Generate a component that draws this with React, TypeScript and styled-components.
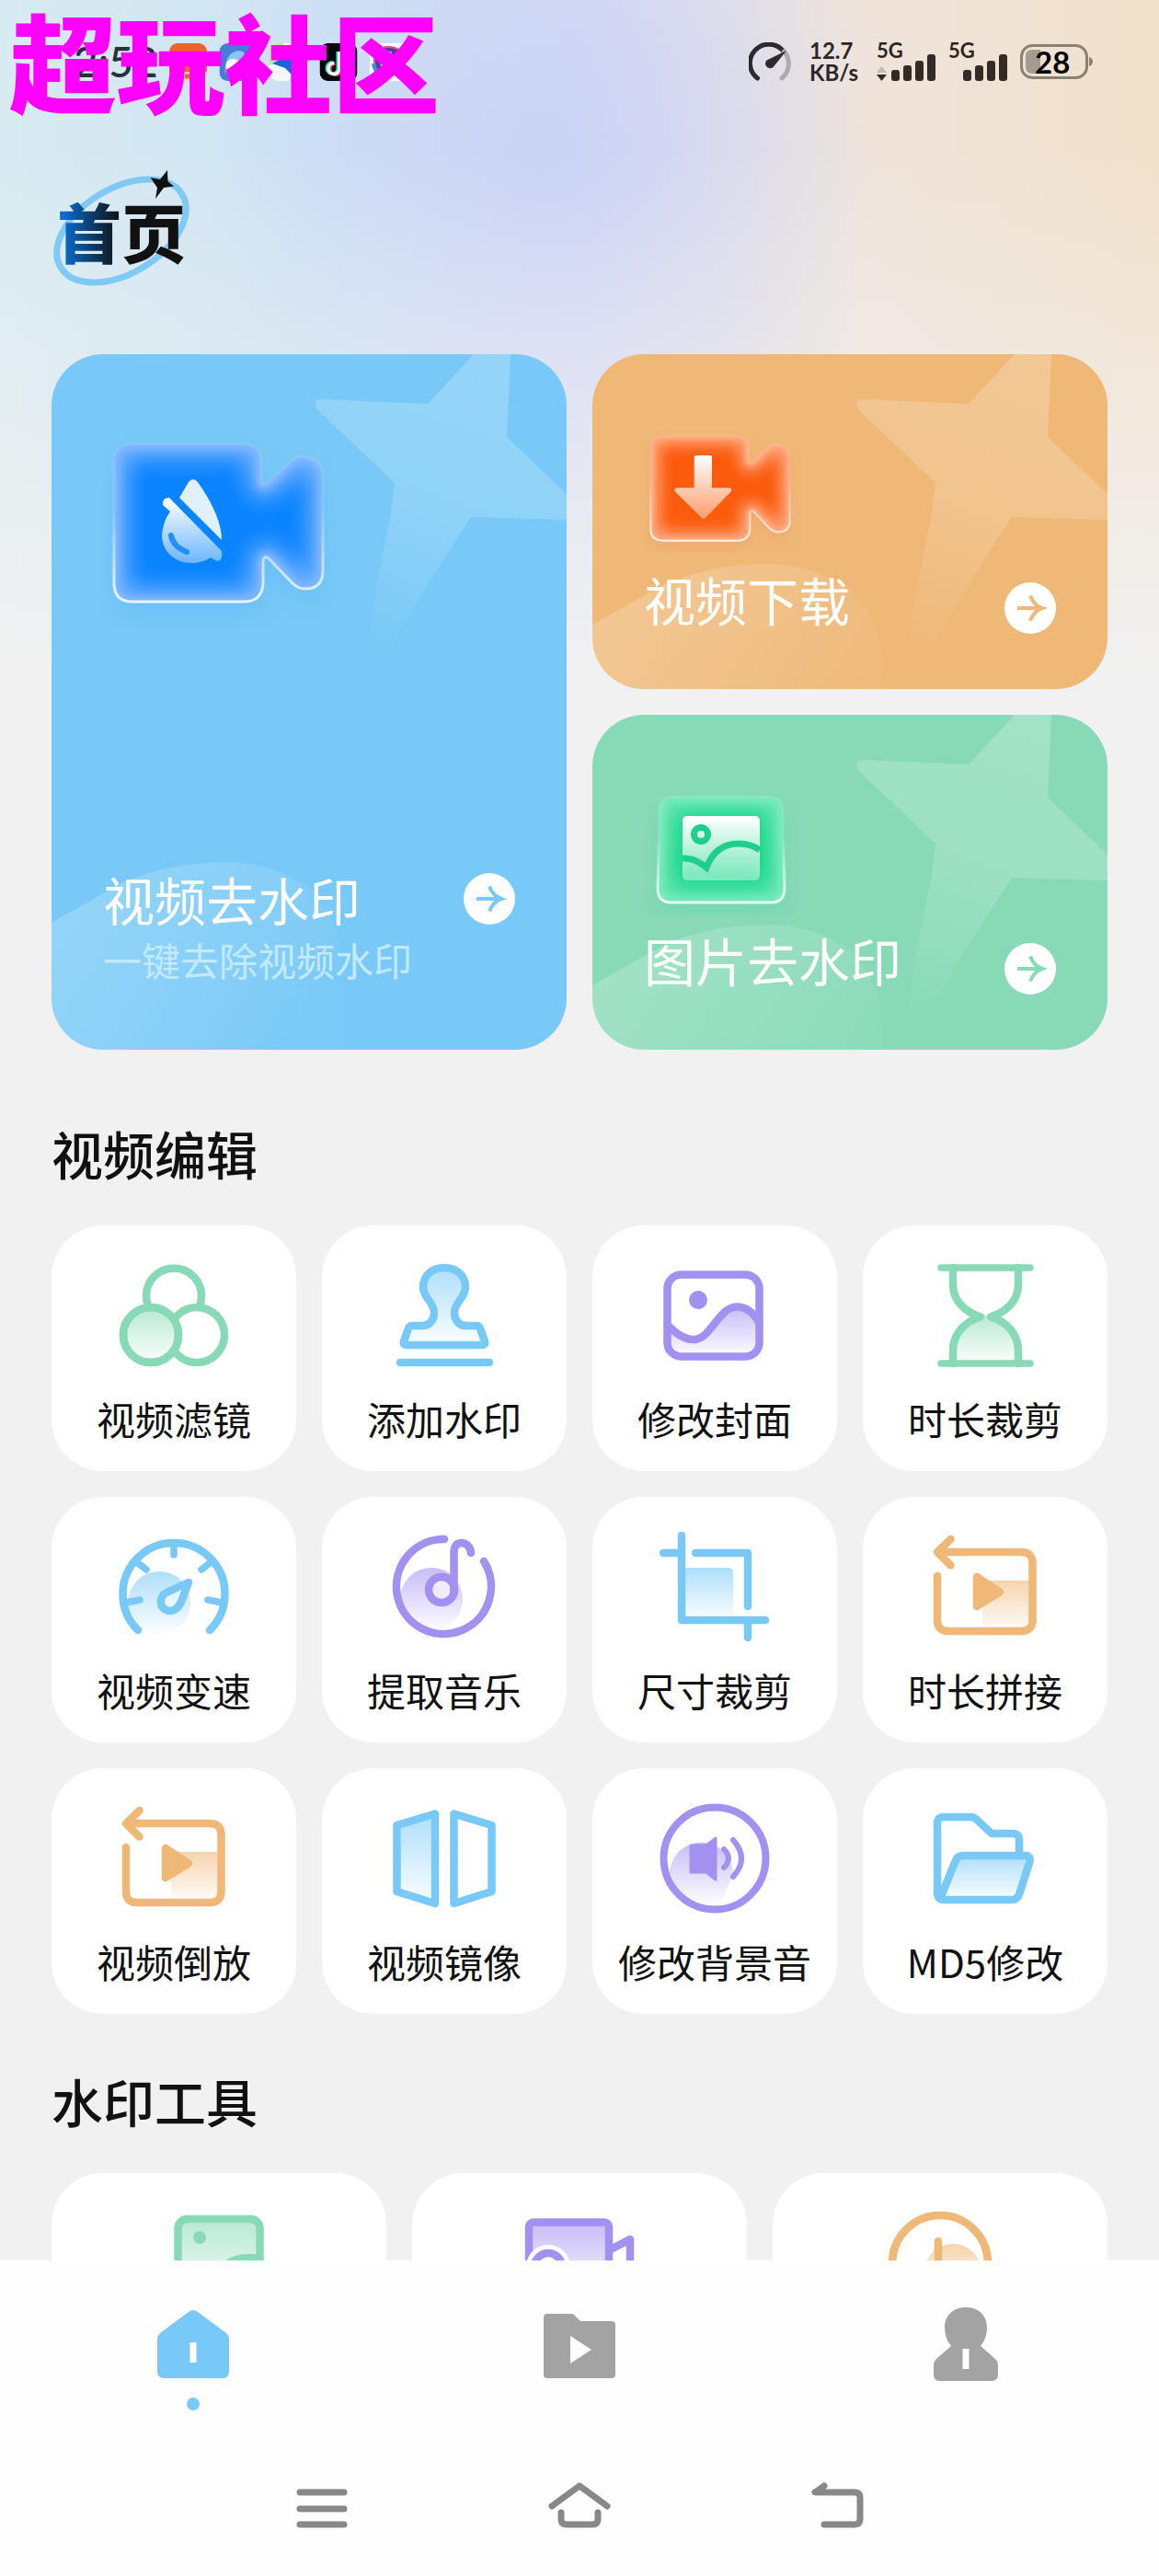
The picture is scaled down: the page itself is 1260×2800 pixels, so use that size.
import React, { ReactNode, useState } from 'react';
import styled, { createGlobalStyle } from 'styled-components';

const BLUE = '#78c9f7';
const GREEN = '#88dab7';
const PURPLE = '#a391f2';
const ORANGE = '#efb877';
const CJK = '"Noto Sans CJK SC", "Noto Sans", sans-serif';

const GlobalStyle = createGlobalStyle`
  *, *::before, *::after { box-sizing: border-box; }
  body { margin: 0; font-family: ${CJK}; color: #111; background: #f1f1f1; }
  button { font: inherit; color: inherit; border: 0; padding: 0; background: none; cursor: pointer; }
  h1, h2, p { margin: 0; }
  svg { display: block; flex: none; }
`;

const Screen = styled.div`
  position: relative;
  display: flex;
  flex-direction: column;
  height: 100vh;
  overflow: hidden;
`;

const Scroller = styled.main`
  flex: 1;
  min-height: 0;
  overflow-y: auto;
  scrollbar-width: none;
  background:
    linear-gradient(180deg, rgba(241, 241, 241, 0) 160px, rgba(241, 241, 241, 0.4) 400px, #f1f1f1 740px),
    radial-gradient(ellipse 360px 380px at 47% 190px, rgba(200, 208, 246, 0.8), rgba(200, 208, 246, 0) 100%),
    linear-gradient(90deg, #d8ebf1 0%, #cde2f4 28%, #d6dcf4 50%, #efe4dc 74%, #f2e1cb 100%);
`;

const Stamp = styled.div`
  position: absolute;
  top: 0;
  left: 10px;
  font-size: 117px;
  line-height: 128px;
  font-weight: 900;
  color: #ff00ff;
  white-space: nowrap;
  pointer-events: none;
`;

const StatusBar = styled.header`
  display: flex;
  align-items: center;
  justify-content: space-between;
  padding: 46px 71px 0 80px;
  height: 88px;
  font-family: Lato, "Open Sans", sans-serif;
`;

const StatusGroup = styled.div<{ $gap: number }>`
  display: flex;
  align-items: center;
  gap: ${(p) => p.$gap}px;
`;

const Clock = styled.span`
  font-size: 46px;
  line-height: 42px;
  font-weight: 500;
  color: #263238;
`;

const NetSpeed = styled.span`
  display: flex;
  flex-direction: column;
  font-size: 24px;
  line-height: 24px;
  font-weight: 700;
  color: #2c2627;
`;

const SignalBox = styled.span`
  display: grid;
  > * { grid-area: 1 / 1; }
`;

const SignalName = styled.span`
  align-self: start;
  font-size: 22px;
  line-height: 18px;
  font-weight: 700;
  color: #2c2622;
`;

const BatteryBox = styled.span`
  display: grid;
  align-items: center;
  > * { grid-area: 1 / 1; }
`;

const BatteryValue = styled.span`
  padding-left: 16px;
  font-size: 33px;
  line-height: 38px;
  font-weight: 700;
  color: #000;
`;

const Logo = styled.h1`
  display: inline-grid;
  place-items: center;
  margin: 96px 0 67px 57px;
  height: 134px;
  > * { grid-area: 1 / 1; }
`;

const LogoText = styled.span`
  font-size: 70px;
  line-height: 100px;
  font-weight: 900;
  background: linear-gradient(90deg, #0b6ccc 5%, #0d2a45 36%, #111 50%);
  background-clip: text;
  -webkit-background-clip: text;
  color: transparent;
`;

const Content = styled.div`
  padding: 0 56px;
`;

const Features = styled.section`
  display: grid;
  grid-template-columns: 1fr 1fr;
  grid-auto-rows: minmax(364px, auto);
  gap: 28px;
  margin-bottom: 72px;
`;

const Card = styled.a<{ $color: string; $tall?: boolean }>`
  position: relative;
  display: flex;
  flex-direction: column;
  justify-content: space-between;
  grid-row: ${(p) => (p.$tall ? 'span 2' : 'auto')};
  padding: ${(p) => (p.$tall ? '88px 56px 70px' : '76px 56px 60px')};
  border-radius: 56px;
  overflow: hidden;
  background: ${(p) => p.$color};
  color: #fff;
  text-decoration: none;
`;

const Backdrop = styled.svg<{ $end?: boolean }>`
  position: absolute;
  ${(p) => (p.$end ? 'left: 0; bottom: 0;' : 'right: 0; top: 0;')}
`;

const CardBody = styled.div`
  position: relative;
`;

const CardRow = styled.div<{ $tall?: boolean }>`
  display: flex;
  justify-content: space-between;
  align-items: ${(p) => (p.$tall ? 'center' : 'flex-end')};
`;

const CardTitle = styled.h2`
  font-size: 56px;
  line-height: 76px;
  font-weight: 400;
`;

const CardNote = styled.p`
  font-size: 42px;
  line-height: 56px;
  color: #c3e9ff;
`;

const SectionTitle = styled.h2`
  margin-bottom: 39px;
  font-size: 56px;
  line-height: 80px;
  font-weight: 500;
`;

const Tools = styled.section<{ $columns: number }>`
  display: grid;
  grid-template-columns: repeat(${(p) => p.$columns}, 1fr);
  gap: 28px;
  margin-bottom: 54px;
`;

const Tool = styled.button`
  display: flex;
  flex-direction: column;
  align-items: center;
  gap: 24px;
  min-height: 267px;
  padding: 38px 0 29px;
  border-radius: 56px;
  background: #fff;
  font-size: 42px;
  line-height: 56px;
  white-space: nowrap;
`;

const Dock = styled.footer`
  background: #fefefe;
`;

const TabBar = styled.nav`
  display: grid;
  grid-template-columns: repeat(3, 1fr);
  padding-top: 51px;
`;

const Tab = styled.button<{ $active: boolean }>`
  display: flex;
  flex-direction: column;
  align-items: center;
  gap: 18px;
  color: ${(p) => (p.$active ? BLUE : '#a3a3a3')};
  &::after {
    content: '';
    width: 14px;
    height: 14px;
    border-radius: 50%;
    background: ${(p) => (p.$active ? 'currentColor' : 'transparent')};
  }
`;

const SystemBar = styled.div`
  display: flex;
  justify-content: space-around;
  padding: 76px 16.6667% 44px;
  color: #888;
`;

/* ---------- status bar drawings ---------- */

const Gauge = () => (
  <svg width="46" height="42" viewBox="0 0 46 42" fill="none" strokeWidth="5" strokeLinecap="round">
    <path d="M9.500 39A20.500 20.500 0 1 1 38 10" stroke="#2b2a2e" />
    <path d="M38.500 10A20.500 20.500 0 0 1 36 39" stroke="#b0aaaf" />
    <path d="M41 9L27 26.500A5 5 0 1 1 19.500 19.500Z" fill="#2b2a2e" />
  </svg>
);

const Bars = ({ data }: { data?: boolean }) => (
  <svg width="65" height="42" viewBox="0 0 65 42" fill="#332c26">
    {data && <path d="M0 33L5.500 26L11 33Z" fill="#c4bab5" />}
    {data && <path d="M0 35L5.500 42L11 35Z" />}
    <rect x="16" y="30" width="9" height="12" rx="3" />
    <rect x="29" y="25" width="9" height="17" rx="3" />
    <rect x="42" y="20" width="9" height="22" rx="3" />
    <rect x="55" y="13" width="9" height="29" rx="3" />
  </svg>
);

const Signal = ({ data }: { data?: boolean }) => (
  <SignalBox>
    <Bars data={data} />
    <SignalName>5G</SignalName>
  </SignalBox>
);

const Battery = () => (
  <BatteryBox>
    <svg width="80" height="38" viewBox="0 0 80 38">
      <rect x="1.500" y="1.500" width="71" height="35" rx="12" fill="none" stroke="#8b8074" strokeWidth="3" />
      <path d="M13 6H22V32H13Q6 32 6 25V13Q6 6 13 6Z" fill="#a39c93" />
      <path d="M75 14Q79 15 79 19T75 24Z" fill="#8b8074" />
    </svg>
    <BatteryValue>28</BatteryValue>
  </BatteryBox>
);

const AppIcons = () => (
  <svg width="259" height="41" viewBox="0 0 259 41">
    <defs>
      <clipPath id="app"><rect width="41" height="41" rx="9" /></clipPath>
    </defs>
    <g clipPath="url(#app)">
      <rect width="41" height="41" fill="#f0622d" />
      <path d="M0 31H41V41H0Z" fill="#ffd5a8" />
      <path d="M9 17H32M15 12V24M27 12V26M10 25Q20 20 32 26" stroke="#fff" strokeWidth="4" fill="none" />
      <path d="M10 36H32" stroke="#e8662f" strokeWidth="5" strokeDasharray="5 2" />
    </g>
    <g transform="translate(54.500)" clipPath="url(#app)">
      <rect width="41" height="41" fill="#477dd6" />
      <path d="M6 32Q6 10 21 8Q36 10 36 32Z" fill="#8cc4f5" />
      <circle cx="15" cy="25" r="8" fill="#fff" />
      <path d="M22 0H41V41H24Q34 20 22 0Z" fill="#477dd6" />
    </g>
    <g transform="translate(109)" clipPath="url(#app)">
      <rect width="41" height="41" fill="#f4f8fb" />
      <path d="M0 0H15V16L0 24Z" fill="#c1eb95" />
      <path d="M28 0H41V41H22Z" fill="#8ed8f4" />
      <path d="M3 22L38 4L24 34L17 27Z" fill="#1467d8" />
    </g>
    <g transform="translate(163.500)" clipPath="url(#app)">
      <rect width="41" height="41" fill="#050508" />
      <path d="M20 9V28A6 6 0 1 1 14 21M20 11Q23 17 30 17" stroke="#25e6e4" strokeWidth="4" fill="none" />
      <path d="M23 10V29A6 6 0 1 1 17 22M23 12Q26 18 32 18" stroke="#f33c5b" strokeWidth="4" fill="none" />
      <path d="M21.500 9V28.500A6 6 0 1 1 15.500 21.500M21.500 11Q25 17 31 17.500" stroke="#fff" strokeWidth="3.500" fill="none" />
    </g>
    <g transform="translate(218)" clipPath="url(#app)">
      <rect width="41" height="41" fill="#fff" />
      <path d="M5 18Q5 4 20 4Q36 4 36 19Q36 34 19 34Q5 34 5 18" fill="#4b3fa8" stroke="#e64a86" strokeWidth="2" />
      <path d="M4 22Q6 36 20 36" stroke="#3a8fe0" strokeWidth="4" fill="none" />
      <path d="M12 15H30M22 9V22M12 24Q20 20 30 26" stroke="#fff" strokeWidth="3" fill="none" />
    </g>
  </svg>
);

const LogoOrbit = () => (
  <svg width="150" height="134" viewBox="0 0 150 134">
    <ellipse cx="75" cy="67" rx="77" ry="46" transform="rotate(-31 75 67)" fill="none" stroke="#7fcaf5" strokeWidth="7" />
    <path d="M125 1L125.500 13L132 18.500L121 20L112 32L114 20L106.500 9L117 11Z" fill="#111" />
  </svg>
);

/* ---------- feature card drawings ---------- */

const CAMERA =
  'M20 0H140Q160 0 160 20V42Q161 46 165 43L192 19Q199 13 207 14Q227 16 227 38V137Q227 157 208 157Q200 157 194 151L169 125Q163 119 162 128V151Q161 171 141 171H20Q0 171 0 151V20Q0 0 20 0Z';

const Star = ({ id }: { id: string }) => (
  <Backdrop width="280" height="340" viewBox="280 0 280 340" aria-hidden="true">
    <defs>
      <linearGradient id={`star-${id}`} x1="0.600" y1="0" x2="0.300" y2="1">
        <stop offset="0" stopColor="#fff" stopOpacity="0.220" />
        <stop offset="0.500" stopColor="#fff" stopOpacity="0.170" />
        <stop offset="1" stopColor="#fff" stopOpacity="0" />
      </linearGradient>
    </defs>
    <path
      d="M293 49L409 54L459 0H499L495 90L560 152V180L456 177Q400 262 360 334L342 334Q348 270 368 180L373 140L289 60Q283 49 293 49Z"
      fill={`url(#star-${id})`}
    />
  </Backdrop>
);

const Hill = ({ id, tall }: { id: string; tall?: boolean }) => (
  <Backdrop $end width="320" height={tall ? 204 : 136} viewBox={`0 0 320 ${tall ? 204 : 136}`} aria-hidden="true">
    <defs>
      <linearGradient id={`hill-${id}`} x1="0" y1="0.200" x2="1" y2="0.600">
        <stop offset="0" stopColor="#fff" stopOpacity="0.220" />
        <stop offset="0.600" stopColor="#fff" stopOpacity="0.110" />
        <stop offset="1" stopColor="#fff" stopOpacity="0.020" />
      </linearGradient>
    </defs>
    <path d="M0 66L78 22Q130 0 190 0Q240 0 280 28Q318 62 317 136V204H0Z" fill={`url(#hill-${id})`} />
  </Backdrop>
);

interface GlassProps {
  id: string;
  shape: string;
  core: string;
  edge: string;
  shade: string;
}

const Glass = ({ id, shape, core, edge, shade }: GlassProps) => (
  <>
    <defs>
      <clipPath id={`${id}-clip`}><path d={shape} /></clipPath>
      <filter id={`${id}-blur`} x="-20%" y="-20%" width="140%" height="150%"><feGaussianBlur stdDeviation="12" /></filter>
      <filter id={`${id}-soft`} x="-20%" y="-20%" width="140%" height="150%"><feGaussianBlur stdDeviation="4" /></filter>
      <linearGradient id={`${id}-rim`} x1="0" y1="0" x2="0" y2="1">
        <stop offset="0.400" stopColor="#fff" stopOpacity="0.100" />
        <stop offset="1" stopColor="#fff" stopOpacity="0.850" />
      </linearGradient>
      <linearGradient id={`${id}-ink`} x1="0" y1="0" x2="0" y2="1">
        <stop offset="0" stopColor="#fff" />
        <stop offset="1" stopColor="#fff" stopOpacity="0.400" />
      </linearGradient>
    </defs>
    <path d={shape} fill={shade} opacity="0.220" transform="translate(0 14)" filter={`url(#${id}-blur)`} />
    <g clipPath={`url(#${id}-clip)`}>
      <path d={shape} fill={core} />
      <path d={shape} fill="none" stroke={edge} strokeWidth="30" opacity="0.850" filter={`url(#${id}-blur)`} />
      <path d={shape} fill="none" stroke={edge} strokeWidth="10" filter={`url(#${id}-soft)`} />
    </g>
    <path d={shape} fill="none" stroke={`url(#${id}-rim)`} strokeWidth="3" />
  </>
);

const DropCamera = () => (
  <svg width="252" height="210" viewBox="-12 -10 252 210">
    <Glass id="drop" shape={CAMERA} core="#0a84ff" edge="#86baff" shade="#3a9df0" />
    <g fill="url(#drop-ink)">
      <path d="M71 58L81 41Q86 35 91 41Q117 78 117 104Z" fill="#e0f0ff" />
      <path d="M53 66Q52 58 60 58L117 116Q119 126 112 127L105 123Q96 129 84 129C66 129 52 116 52 99Q53 84 61 73Z" />
    </g>
    <path d="M62 99Q64 111 79 117" stroke="#248ffb" strokeWidth="6" strokeLinecap="round" fill="none" />
  </svg>
);

const DownloadCamera = () => (
  <svg width="176" height="140" viewBox="-11 -19 264 210">
    <Glass id="down" shape={CAMERA} core="#fb5b0c" edge="#ffb08c" shade="#e8824c" />
    <path d="M74 32H97Q100 32 100 35V85H128Q135 86 130 92L89 134Q86 137 83 134L41 92Q36 86 43 85H71V35Q71 32 74 32Z" fill="url(#down-ink)" />
  </svg>
);

const PictureTile = () => (
  <svg width="168" height="142" viewBox="-14 -13 168 142">
    <Glass
      id="pic"
      shape="M16 0H123Q137 0 137 16L139 99Q139 115 124 115H16Q1 115 1 99L3 16Q3 0 16 0Z"
      core="#12d688"
      edge="#80ebc1"
      shade="#2fd398"
    />
    <rect x="28" y="21" width="84" height="70" rx="5" fill="url(#pic-ink)" />
    <circle cx="48" cy="41" r="7.500" fill="none" stroke="#1fce8b" strokeWidth="7" />
    <path d="M28 67Q41 66 54 77Q64 51 89 51Q102 51 112 58" fill="none" stroke="#1fce8b" strokeWidth="7" />
  </svg>
);

const GoIcon = ({ color }: { color: string }) => (
  <svg width="56" height="56" viewBox="0 0 56 56" fill="none">
    <circle cx="28" cy="28" r="28" fill="#fff" />
    <path d="M14 28H40M28 14.500Q32 25 41 28Q32 31 28 41.500" stroke={color} strokeWidth="4" />
  </svg>
);

/* ---------- tool drawings ---------- */

interface ToolIconProps {
  id: string;
  color: string;
  children: (wash: string) => ReactNode;
}

const ToolIcon = ({ id, color, children }: ToolIconProps) => (
  <svg width="120" height="120" viewBox="0 0 120 120" fill="none" stroke={color} strokeWidth="8.500" strokeLinecap="round" strokeLinejoin="round">
    <defs>
      <linearGradient id={`wash-${id}`} x1="0" y1="0" x2="0" y2="1">
        <stop offset="0" stopColor={color} stopOpacity="0.600" />
        <stop offset="1" stopColor={color} stopOpacity="0.030" />
      </linearGradient>
    </defs>
    {children(`url(#wash-${id})`)}
  </svg>
);

const FilterIcon = () => (
  <ToolIcon id="filter" color={GREEN}>
    {(wash) => (
      <>
        <circle cx="60" cy="38.500" r="30" />
        <circle cx="85" cy="81" r="30" fill="#fff" />
        <circle cx="35" cy="81" r="30" fill="#fff" />
        <circle cx="35" cy="81" r="30" fill={wash} />
      </>
    )}
  </ToolIcon>
);

const StampIcon = () => (
  <ToolIcon id="stamp" color={BLUE}>
    {(wash) => (
      <>
        <path
          d="M60 8C46 8 37 17 37 29C37 41 49 45 49 57C49 66 43 71 36 71H25Q22 71 21 74L16 88Q15 92 19 92H101Q105 92 104 88L99 74Q98 71 95 71H84C77 71 71 66 71 57C71 45 83 41 83 29C83 17 74 8 60 8Z"
          fill={wash}
        />
        <path d="M12 111H109" />
      </>
    )}
  </ToolIcon>
);

const CoverIcon = () => (
  <ToolIcon id="cover" color={PURPLE}>
    {(wash) => (
      <>
        <path d="M8.500 70C18 80 28 86 37 86C56 86 64 50.500 84 50.500C95 50.500 103 58 108.500 68V104H8.500Z" fill={wash} stroke="none" />
        <path d="M8.500 70C18 80 28 86 37 86C56 86 64 50.500 84 50.500C95 50.500 103 58 108.500 68" />
        <rect x="8.500" y="15.500" width="100" height="89" rx="15" />
        <circle cx="42" cy="43" r="10" fill={PURPLE} stroke="none" />
      </>
    )}
  </ToolIcon>
);

const HourglassIcon = () => (
  <ToolIcon id="hourglass" color={GREEN}>
    {(wash) => (
      <>
        <path d="M60 60C38 68 25 80 25 98V112H96V98C96 80 83 68 60 60Z" fill={wash} stroke="none" />
        <path d="M12 8H109M12 112H109" strokeWidth="7.500" />
        <path d="M25 8V26C25 44 38 56 55 61.500C38 66 25 80 25 98V112" />
        <path d="M96 8V26C96 44 83 56 66 61.500C83 66 96 80 96 98V112" />
      </>
    )}
  </ToolIcon>
);

const SpeedIcon = () => (
  <ToolIcon id="speed" color={BLUE}>
    {(wash) => (
      <>
        <circle cx="44" cy="77" r="34" fill={wash} stroke="none" />
        <path d="M21 107A55.500 55.500 0 1 1 99 107" />
        <path d="M60 12V25M21 34L30 41M99 34L90 41M8 77L23 74M112 77L97 74" strokeWidth="7.500" />
        <path d="M76 55L52 66C44 70 44 82 52 85C59 88 65 83 68 76Z" fill="#e6f5fe" />
      </>
    )}
  </ToolIcon>
);

const MusicIcon = () => (
  <ToolIcon id="music" color={PURPLE}>
    {(wash) => (
      <>
        <circle cx="46" cy="73" r="34" fill={wash} stroke="none" />
        <path d="M60 8A51.500 51.500 0 1 0 103 32" />
        <circle cx="57" cy="63" r="14" fill="#efeafd" />
        <path d="M70.500 66V22Q71 12 79 12Q88 13 89 23" />
      </>
    )}
  </ToolIcon>
);

const CropIcon = () => (
  <ToolIcon id="crop" color={BLUE}>
    {(wash) => (
      <>
        <path d="M24 39H75Q80 39 80 45V96H24Z" fill={wash} stroke="none" />
        <path d="M24 4V96H115M4 23H24M39 23H96V81M96 96V115" />
      </>
    )}
  </ToolIcon>
);

const ReverseIcon = ({ id }: { id: string }) => (
  <ToolIcon id={id} color={ORANGE}>
    {(wash) => (
      <>
        <path d="M57 53H110V108H57Z" fill={wash} stroke="none" />
        <path d="M22.500 8L8 22L22.500 36.500M9 22H99Q111.500 22 111.500 34V96Q111.500 108 99 108H20Q8 108 8 96V48" />
        <path d="M51 49V81L76 65.500Z" fill={ORANGE} />
      </>
    )}
  </ToolIcon>
);

const MirrorIcon = () => (
  <ToolIcon id="mirror" color={BLUE}>
    {(wash) => (
      <>
        <path d="M8.500 24L50 11.500V109L8.500 96Z" fill={wash} />
        <path d="M111.500 24L70.500 11.500V109L111.500 96Z" />
      </>
    )}
  </ToolIcon>
);

const SpeakerIcon = () => (
  <ToolIcon id="speaker" color={PURPLE}>
    {(wash) => (
      <>
        <path d="M11 77A34.500 34.500 0 0 1 80 77L68 106Q40 116 18 93Z" fill={wash} stroke="none" />
        <circle cx="60" cy="60" r="55.500" strokeWidth="8" />
        <path d="M34 46H51L61 38V83L51 75H34Z" fill={PURPLE} strokeWidth="3" />
        <path d="M70 50Q80 60 70 70M80 40Q98 60 80 80" strokeWidth="6" />
      </>
    )}
  </ToolIcon>
);

const FolderIcon = () => (
  <ToolIcon id="folder" color={BLUE}>
    {(wash) => (
      <>
        <path d="M97 57V40Q97 33 90 33H67L51 18Q48 15 44 15H15Q8 15 8 22V97Q8 105 16 105" />
        <path d="M36 57H104Q110 57 108 65L97 99Q95 105 89 105H17Q11 105 13 99L28 62Q30 57 36 57Z" fill={wash} />
      </>
    )}
  </ToolIcon>
);

const PictureIcon = () => (
  <ToolIcon id="picture" color={GREEN}>
    {(wash) => (
      <>
        <rect x="15.500" y="12" width="89" height="96" rx="10" fill={wash} />
        <circle cx="39" cy="32" r="7" fill={GREEN} stroke="none" />
        <path d="M15 92Q32 74 48 84Q66 54 92 54Q100 54 104 57" />
      </>
    )}
  </ToolIcon>
);

const VideoSearchIcon = () => (
  <ToolIcon id="search" color={PURPLE}>
    {(wash) => (
      <>
        <rect x="5" y="15.500" width="87" height="88" rx="5" fill={wash} />
        <path d="M94 45L115 34V90L94 78" />
        <circle cx="26" cy="64" r="24" fill="#fff" stroke="none" />
        <circle cx="26" cy="64" r="15" />
      </>
    )}
  </ToolIcon>
);

const TimerIcon = () => (
  <ToolIcon id="timer" color={ORANGE}>
    {(wash) => (
      <>
        <circle cx="74" cy="70" r="31" fill={wash} stroke="none" />
        <circle cx="60" cy="60" r="52" />
        <path d="M58 36V64L76 76" />
      </>
    )}
  </ToolIcon>
);

/* ---------- dock drawings ---------- */

const HomeTab = () => (
  <svg width="78" height="80" viewBox="0 -3 78 80" fill="currentColor">
    <path d="M34 2Q39 -2 44 2L75 25Q78 28 78 32V67Q78 74 71 74H7Q0 74 0 67V32Q0 28 3 25Z" />
    <rect x="35.500" y="35" width="7" height="22" fill="#fff" />
  </svg>
);

const WorksTab = () => (
  <svg width="78" height="80" viewBox="0 -7 78 80" fill="currentColor">
    <path d="M0 4Q0 0 4 0H31Q33 0 34 2L40 8H74Q78 8 78 12V66Q78 70 74 70H4Q0 70 0 66Z" />
    <path d="M29 24L52 39L29 54Z" fill="#fff" />
  </svg>
);

const ProfileTab = () => (
  <svg width="70" height="80" viewBox="0 0 70 80" fill="currentColor">
    <path d="M19 42Q12 34 12 22C12 8 22 0 35 0S58 8 58 22Q58 34 51 42L67 56Q70 59 70 62V73Q70 80 63 80H7Q0 80 0 73V62Q0 59 3 56Z" />
    <rect x="31.500" y="45" width="7" height="22" fill="#fff" />
  </svg>
);

const SystemIcon = ({ d }: { d: string }) => (
  <svg width="72" height="60" viewBox="0 0 72 60" fill="none" stroke="currentColor" strokeWidth="7" strokeLinecap="round" strokeLinejoin="round">
    <path d={d} />
  </svg>
);

const editTools = [
  { name: '视频滤镜', icon: <FilterIcon /> },
  { name: '添加水印', icon: <StampIcon /> },
  { name: '修改封面', icon: <CoverIcon /> },
  { name: '时长裁剪', icon: <HourglassIcon /> },
  { name: '视频变速', icon: <SpeedIcon /> },
  { name: '提取音乐', icon: <MusicIcon /> },
  { name: '尺寸裁剪', icon: <CropIcon /> },
  { name: '时长拼接', icon: <ReverseIcon id="join" /> },
  { name: '视频倒放', icon: <ReverseIcon id="reverse" /> },
  { name: '视频镜像', icon: <MirrorIcon /> },
  { name: '修改背景音', icon: <SpeakerIcon /> },
  { name: 'MD5修改', icon: <FolderIcon /> },
];

const markTools = [
  { name: '图片', icon: <PictureIcon /> },
  { name: '视频', icon: <VideoSearchIcon /> },
  { name: '时间', icon: <TimerIcon /> },
];

const tabs = [
  { name: '首页', icon: <HomeTab /> },
  { name: '作品', icon: <WorksTab /> },
  { name: '我的', icon: <ProfileTab /> },
];

const systemKeys = [
  { name: '菜单', d: 'M12 13H60M12 31H60M12 48H60' },
  { name: '主屏幕', d: 'M6 28L36 6L66 28M16 35V42Q16 48 22 48H50Q56 48 56 42V35' },
  { name: '返回', d: 'M22 6L12 13H55Q61 13 61 19V42Q61 48 55 48H22' },
];

export default function App() {
  const [active, setActive] = useState(0);

  return (
    <Screen>
      <GlobalStyle />
      <Scroller>
        <StatusBar>
          <StatusGroup $gap={12}>
            <Clock>2:52</Clock>
            <AppIcons />
          </StatusGroup>
          <StatusGroup $gap={20}>
            <Gauge />
            <NetSpeed>
              <span>12.7</span>
              <span>KB/s</span>
            </NetSpeed>
            <StatusGroup $gap={13}>
              <Signal data />
              <Signal />
              <Battery />
            </StatusGroup>
          </StatusGroup>
        </StatusBar>

        <Logo>
          <LogoOrbit />
          <LogoText>首页</LogoText>
        </Logo>

        <Content>
          <Features>
            <Card href="#video" $color={BLUE} $tall>
              <Star id="video" />
              <Hill id="video" tall />
              <CardBody><DropCamera /></CardBody>
              <CardBody>
                <CardRow $tall>
                  <CardTitle>视频去水印</CardTitle>
                  <GoIcon color={BLUE} />
                </CardRow>
                <CardNote>一键去除视频水印</CardNote>
              </CardBody>
            </Card>
            <Card href="#download" $color={ORANGE}>
              <Star id="download" />
              <Hill id="download" />
              <CardBody><DownloadCamera /></CardBody>
              <CardBody>
                <CardRow>
                  <CardTitle>视频下载</CardTitle>
                  <GoIcon color={ORANGE} />
                </CardRow>
              </CardBody>
            </Card>
            <Card href="#picture" $color={GREEN}>
              <Star id="picture" />
              <Hill id="picture" />
              <CardBody><PictureTile /></CardBody>
              <CardBody>
                <CardRow>
                  <CardTitle>图片去水印</CardTitle>
                  <GoIcon color={GREEN} />
                </CardRow>
              </CardBody>
            </Card>
          </Features>

          <SectionTitle>视频编辑</SectionTitle>
          <Tools $columns={4}>
            {editTools.map((tool) => (
              <Tool key={tool.name} type="button">
                {tool.icon}
                {tool.name}
              </Tool>
            ))}
          </Tools>

          <SectionTitle>水印工具</SectionTitle>
          <Tools $columns={3}>
            {markTools.map((tool) => (
              <Tool key={tool.name} type="button" aria-label={tool.name}>
                {tool.icon}
              </Tool>
            ))}
          </Tools>
        </Content>
      </Scroller>

      <Dock>
        <TabBar>
          {tabs.map((tab, index) => (
            <Tab key={tab.name} type="button" aria-label={tab.name} $active={index === active} onClick={() => setActive(index)}>
              {tab.icon}
            </Tab>
          ))}
        </TabBar>
        <SystemBar>
          {systemKeys.map((key) => (
            <button key={key.name} type="button" aria-label={key.name}>
              <SystemIcon d={key.d} />
            </button>
          ))}
        </SystemBar>
      </Dock>

      <Stamp>超玩社区</Stamp>
    </Screen>
  );
}
